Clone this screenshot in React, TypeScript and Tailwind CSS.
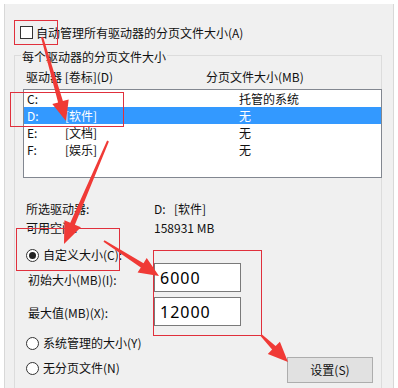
const drives = [
  { letter: "C:", label: "", size: "托管的系统" },
  { letter: "D:", label: "[软件]", size: "无", selected: true },
  { letter: "E:", label: "[文档]", size: "无" },
  { letter: "F:", label: "[娱乐]", size: "无" },
];

type Pt = [number, number];

// red annotation arrow: tapered shaft with a filled head
function arrowPoints(tail: Pt, tip: Pt, headLen = 20, headW = 17, tailW = 2, shaftW = 5) {
  const dx = tip[0] - tail[0];
  const dy = tip[1] - tail[1];
  const len = Math.hypot(dx, dy);
  const ux = dx / len;
  const uy = dy / len;
  const nx = -uy;
  const ny = ux;
  const bx = tip[0] - ux * headLen;
  const by = tip[1] - uy * headLen;
  const p = (x: number, y: number) => `${x.toFixed(1)},${y.toFixed(1)}`;
  return [
    p(tail[0] + nx * tailW / 2, tail[1] + ny * tailW / 2),
    p(bx + nx * shaftW / 2, by + ny * shaftW / 2),
    p(bx + nx * headW / 2, by + ny * headW / 2),
    p(tip[0], tip[1]),
    p(bx - nx * headW / 2, by - ny * headW / 2),
    p(bx - nx * shaftW / 2, by - ny * shaftW / 2),
    p(tail[0] - nx * tailW / 2, tail[1] - ny * tailW / 2),
  ].join(" ");
}

function Radio({ checked }: { checked?: boolean }) {
  return (
    <span className="flex h-[13px] w-[13px] items-center justify-center rounded-full border border-[#333333] bg-white">
      {checked && <span className="h-[7px] w-[7px] rounded-full bg-[#222222]" />}
    </span>
  );
}

export default function App() {
  return (
    <div
      className="relative h-[388px] w-[398px] overflow-hidden bg-white text-[12px] text-[#111111]"
      style={{ fontFamily: '"Noto Sans CJK SC", "Noto Sans", sans-serif' }}
    >
      <div className="ml-[4px] mt-[4px] h-[384px] w-[390px] border-l border-r border-[#d8d8d8] bg-[#f0f0f0] pt-[22px]">
        {/* auto manage */}
        <div className="flex h-[13px] items-center pl-[15px]">
          <span className="h-[13px] w-[13px] border border-[#333333] bg-white" />
          <span className="ml-[3px] leading-[13px]">自动管理所有驱动器的分页文件大小(A)</span>
        </div>

        {/* group box */}
        <div className="ml-[9px] mt-[16px] h-[360px] w-[368px] border border-b-0 border-[#dcdcdc]">
          <div className="-mt-[6px] ml-[6px] h-[14px] w-fit bg-[#f0f0f0] px-[1px] leading-[14px]">
            每个驱动器的分页文件大小
          </div>

          <div className="mt-[6px] flex h-[14px] items-center leading-[14px]">
            <span className="w-[191px] pl-[11px]">驱动器 [卷标](D)</span>
            <span>分页文件大小(MB)</span>
          </div>

          <div className="-mr-[2px] ml-[8px] mt-[5px] h-[89px] w-[359px] border border-[#828790] bg-white">
            {drives.map((d) => (
              <div
                key={d.letter}
                className={
                  "flex h-[17px] items-center leading-[17px] " +
                  (d.selected ? "bg-[#3399ff] text-white" : "")
                }
              >
                <span className="w-[41px] pl-[3px]">{d.letter}</span>
                <span className="w-[174px]">{d.label}</span>
                <span>{d.size}</span>
              </div>
            ))}
          </div>

          <div className="mt-[24px] flex h-[14px] items-center leading-[14px]">
            <span className="w-[139px] pl-[11px]">所选驱动器:</span>
            <span className="w-[20px]">D:</span>
            <span>[软件]</span>
          </div>
          <div className="mt-[5px] flex h-[14px] items-center leading-[14px]">
            <span className="w-[139px] pl-[11px]">可用空间:</span>
            <span>158931 MB</span>
          </div>

          <div className="mt-[13px] flex h-[14px] items-center pl-[11px] leading-[14px]">
            <Radio checked />
            <span className="ml-[4px]">自定义大小(C):</span>
          </div>

          <div className="mt-[1px] flex h-[29px] items-center">
            <span className="mt-[5px] w-[139px] pl-[13px] leading-[14px]">初始大小(MB)(I):</span>
            <div
              className="flex h-[29px] w-[87px] items-center border border-[#7a7a7a] bg-white pl-[5px] text-[16px] tracking-[1px] text-black"
              style={{ fontFamily: '"Noto Sans", sans-serif' }}
            >
              6000
            </div>
          </div>
          <div className="mt-[5px] flex h-[29px] items-center">
            <span className="mt-[3px] w-[139px] pl-[13px] leading-[14px]">最大值(MB)(X):</span>
            <div
              className="flex h-[29px] w-[87px] items-center border border-[#7a7a7a] bg-white pl-[5px] text-[16px] tracking-[1px] text-black"
              style={{ fontFamily: '"Noto Sans", sans-serif' }}
            >
              12000
            </div>
          </div>

          <div className="mt-[10px] flex h-[14px] items-center pl-[11px] leading-[14px]">
            <Radio />
            <span className="ml-[4px]">系统管理的大小(Y)</span>
          </div>

          <div className="mt-[7px] flex items-start">
            <div className="mt-[4px] flex h-[14px] w-[272px] items-center pl-[11px] leading-[14px]">
              <Radio />
              <span className="ml-[4px]">无分页文件(N)</span>
            </div>
            <div className="flex h-[26px] w-[86px] items-center justify-center border border-[#adadad] bg-[#e1e1e1]">
              设置(S)
            </div>
          </div>
        </div>
      </div>

      {/* annotation boxes */}
      <div className="absolute left-[14px] top-[20px] h-[25px] w-[44px] border border-[#e0303c]" />
      <div className="absolute left-[10px] top-[92px] h-[35px] w-[114px] border border-[#e0303c]" />
      <div className="absolute left-[16px] top-[228px] h-[43px] w-[104px] border border-[#e0303c]" />
      <div className="absolute left-[153px] top-[250px] h-[86px] w-[109px] border border-[#e0303c]" />

      {/* annotation arrows */}
      <svg className="pointer-events-none absolute left-0 top-0" width="398" height="388">
        <g fill="#f03a36">
          <polygon points={arrowPoints([42, 37], [66, 121])} />
          <polygon points={arrowPoints([108, 141], [64, 244], 22, 18)} />
          <polygon points={arrowPoints([104, 241], [159, 276], 20, 17)} />
          <polygon points={arrowPoints([261, 335], [288, 362], 20, 17)} />
        </g>
      </svg>
    </div>
  );
}
